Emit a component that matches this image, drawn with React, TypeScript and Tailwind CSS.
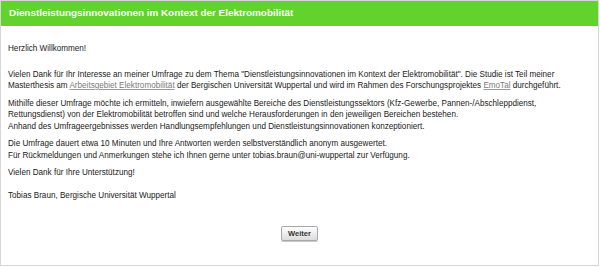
import { FC } from 'react';

const font = { fontFamily: 'Tahoma, "Liberation Sans", sans-serif' };

const Paragraph: FC<{ children: React.ReactNode; className?: string }> = ({ children, className }) => (
  <p className={`leading-[11.5px] ${className ?? ''}`}>{children}</p>
);

const Anchor: FC<{ children: React.ReactNode }> = ({ children }) => (
  <a href="#" className="text-[#7a7a7a] underline decoration-[#9a9a9a]">
    {children}
  </a>
);

export default function App() {
  return (
    <div className="w-[600px] h-[267px] bg-white" style={font}>
      <div className="w-[599px] h-[266px] border border-[#d6d6d6] flex flex-col">
        <div className="h-[25px] bg-[#62d22c] flex items-center pl-[8px]">
          <h1 className="text-white font-bold text-[9.9px]">
            Dienstleistungsinnovationen im Kontext der Elektromobilität
          </h1>
        </div>
        <div className="flex-1 flex flex-col px-[7px] text-[8.15px] text-[#1a1a1a]">
          <Paragraph className="mt-[17px]">Herzlich Willkommen!</Paragraph>
          <Paragraph className="mt-[14px]">
            Vielen Dank für Ihr Interesse an meiner Umfrage zu dem Thema "Dienstleistungsinnovationen im Kontext der
            Elektromobilität". Die Studie ist Teil meiner
            <br />
            Masterthesis am <Anchor>Arbeitsgebiet Elektromobilität</Anchor> der Bergischen Universität Wuppertal und
            wird im Rahmen des Forschungsprojektes <Anchor>EmoTal</Anchor> durchgeführt.
          </Paragraph>
          <Paragraph className="mt-[6px]">
            Mithilfe dieser Umfrage möchte ich ermitteln, inwiefern ausgewählte Bereiche des Dienstleistungssektors
            (Kfz-Gewerbe, Pannen-/Abschleppdienst,
            <br />
            Rettungsdienst) von der Elektromobilität betroffen sind und welche Herausforderungen in den jeweiligen
            Bereichen bestehen.
            <br />
            Anhand des Umfrageergebnisses werden Handlungsempfehlungen und Dienstleistungsinnovationen konzeptioniert.
          </Paragraph>
          <Paragraph className="mt-[6px]">
            Die Umfrage dauert etwa 10 Minuten und Ihre Antworten werden selbstverständlich anonym ausgewertet.
            <br />
            Für Rückmeldungen und Anmerkungen stehe ich Ihnen gerne unter tobias.braun@uni-wuppertal zur Verfügung.
          </Paragraph>
          <Paragraph className="mt-[6px]">Vielen Dank für Ihre Unterstützung!</Paragraph>
          <Paragraph className="mt-[11px]">Tobias Braun, Bergische Universität Wuppertal</Paragraph>
          <div className="flex justify-center mt-[25px]">
            <button className="h-[15px] px-[6px] text-[7.5px] font-bold text-[#333] border border-[#a9a9a9] rounded-[2px] bg-gradient-to-b from-white to-[#dcdcdc] shadow-[0_1px_0_#c8c8c8]">
              Weiter
            </button>
          </div>
        </div>
      </div>
    </div>
  );
}
